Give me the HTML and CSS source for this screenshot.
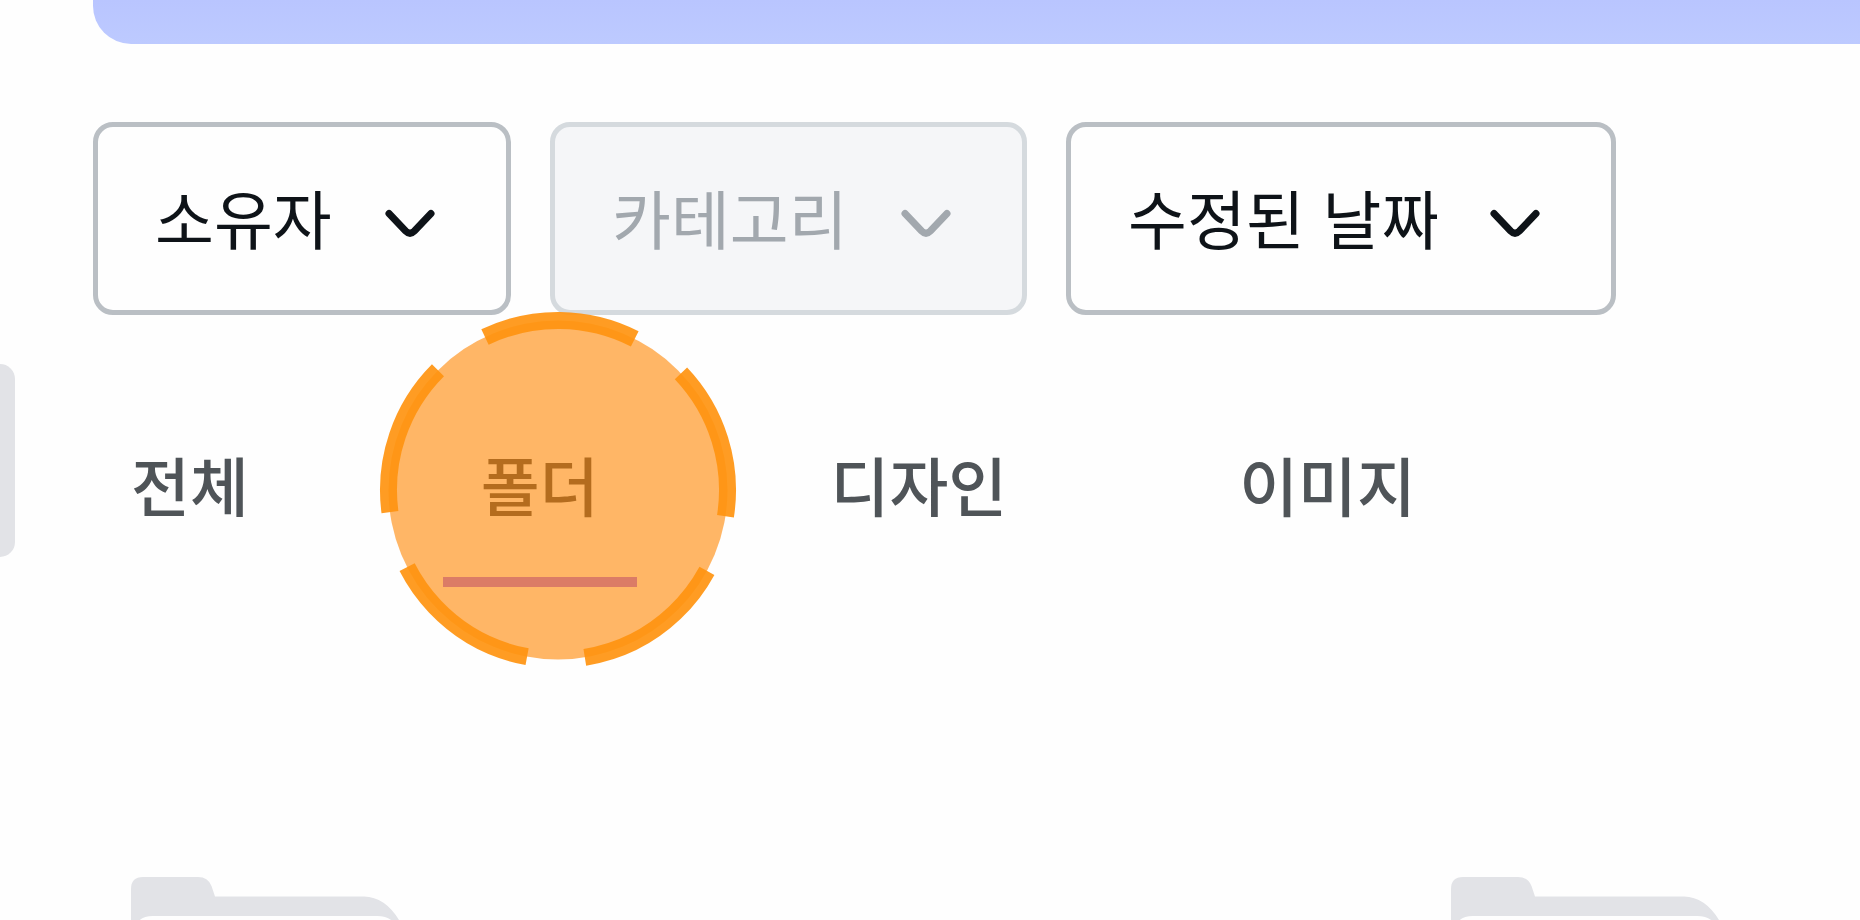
FILE: index.html
```html
<!DOCTYPE html>
<html lang="ko">
<head>
<meta charset="utf-8">
<meta name="viewport" content="width=device-width, initial-scale=1">
<title>프로젝트</title>
<link rel="stylesheet" href="styles.css">
</head>
<body>
<div class="page">
  <aside class="rail"><div class="rail-item"></div></aside>
  <main class="content">
    <div class="banner"></div>

    <form class="filters">
      <div class="filter">
        <select class="filter-select" aria-label="소유자"><option>소유자</option></select>
        <svg class="chevron" viewBox="0 0 78 78" aria-hidden="true"><path d="M18 33.500 34.600 51Q39 55.400 43.400 51L60 33.500"/></svg>
      </div>
      <div class="filter filter-disabled">
        <select class="filter-select" aria-label="카테고리" disabled><option>카테고리</option></select>
        <svg class="chevron" viewBox="0 0 78 78" aria-hidden="true"><path d="M18 33.500 34.600 51Q39 55.400 43.400 51L60 33.500"/></svg>
      </div>
      <div class="filter">
        <select class="filter-select" aria-label="수정된 날짜"><option>수정된 날짜</option></select>
        <svg class="chevron" viewBox="0 0 78 78" aria-hidden="true"><path d="M18 33.500 34.600 51Q39 55.400 43.400 51L60 33.500"/></svg>
      </div>
    </form>

    <div class="tabs" role="tablist">
      <button class="tab" type="button" role="tab" aria-selected="false">전체</button>
      <button class="tab tab-active" type="button" role="tab" aria-selected="true">폴더
        <svg class="highlight" viewBox="0 0 356 356" aria-hidden="true">
          <circle class="highlight-fill" cx="178" cy="178" r="169.5"/>
          <circle class="highlight-ring" cx="178" cy="178" r="169.5" pathLength="360" transform="rotate(-43.5 178 178)"/>
        </svg>
      </button>
      <button class="tab" type="button" role="tab" aria-selected="false">디자인</button>
      <button class="tab" type="button" role="tab" aria-selected="false">이미지</button>
    </div>

    <div class="folders">
      <svg class="folder" viewBox="0 0 272 220" aria-hidden="true">
        <path class="folder-back" d="M0 12Q0 0 12 0H67Q77 0 80.500 9L84 19.500H233Q254 20 268 43Q272 52 272 62V220H0Z"/>
        <path class="folder-front" d="M4 220V56Q4 39 22 39H246Q268 39 268 64V220Z"/>
      </svg>
      <svg class="folder" viewBox="0 0 272 220" aria-hidden="true">
        <path class="folder-back" d="M0 12Q0 0 12 0H67Q77 0 80.500 9L84 19.500H233Q254 20 268 43Q272 52 272 62V220H0Z"/>
        <path class="folder-front" d="M4 220V56Q4 39 22 39H246Q268 39 268 64V220Z"/>
      </svg>
    </div>
  </main>
</div>
</body>
</html>
```

FILE: styles.css
```css
* {
  box-sizing: border-box;
}

body {
  margin: 0;
  background: #fefefe;
  color: #0e1318;
  font-family: "Noto Sans CJK KR", sans-serif;
  font-size: 64px;
  line-height: 96px;
}

.page {
  display: grid;
  grid-template-columns: 93px minmax(0, 1fr);
  height: 100vh;
  overflow: hidden;
}

.rail {
  padding-top: 364px;
}

.rail-item {
  width: 15px;
  height: 193px;
  border-radius: 0 20px 20px 0;
  background: #e2e3e7;
}

.banner {
  height: 44px;
  border-bottom-left-radius: 38px;
  background: linear-gradient(#b9c5ff, #bdcaff);
}

.filters {
  display: flex;
  gap: 39px;
  margin-top: 78px;
}

.filter {
  display: grid;
  align-items: center;
}

.filter-select,
.chevron {
  grid-area: 1 / 1;
}

.filter-select {
  height: 193px;
  padding: 0 174px 5px 57px;
  border: 5px solid #babfc4;
  border-radius: 20px;
  appearance: none;
  background: #fefefe;
  color: #0e1318;
  font: inherit;
  cursor: pointer;
}

.chevron {
  width: 78px;
  height: 78px;
  margin-right: 62px;
  justify-self: end;
  fill: none;
  stroke: #0e1318;
  stroke-width: 7;
  stroke-linecap: round;
  pointer-events: none;
}

.filter-disabled .filter-select {
  border-color: #d5dade;
  background: #f5f6f8;
  color: #a2a8ae;
  opacity: 1;
  cursor: default;
}

.filter-disabled .chevron {
  stroke: #a2a8ae;
}

.tabs {
  display: flex;
  gap: 156px;
  margin-top: 73px;
}

.tab {
  position: relative;
  height: 199px;
  padding: 0 38px 9px;
  border: 0;
  background: none;
  color: #4f5458;
  font: inherit;
  font-weight: 500;
  white-space: nowrap;
  cursor: pointer;
}

.tab-active {
  color: #44484c;
}

.tab-active::after {
  content: "";
  position: absolute;
  inset: auto 0 0;
  height: 10px;
  background: #a56eff;
}

.highlight {
  position: absolute;
  z-index: 1;
  top: -76px;
  left: -63px;
  width: 356px;
  height: 356px;
  overflow: visible;
  pointer-events: none;
}

.highlight-fill {
  fill: rgba(255, 133, 0, 0.6);
}

.highlight-ring {
  fill: none;
  stroke: rgba(255, 148, 16, 0.92);
  stroke-width: 17;
  stroke-dasharray: 52.4 19.6;
}

.folders {
  display: grid;
  grid-auto-flow: column;
  grid-auto-columns: 1281px;
  gap: 39px;
  margin-top: 290px;
  padding-left: 38px;
}

.folder {
  width: 272px;
  height: 220px;
}

.folder-back {
  fill: #e2e3e7;
}

.folder-front {
  fill: #fefefe;
}
```
